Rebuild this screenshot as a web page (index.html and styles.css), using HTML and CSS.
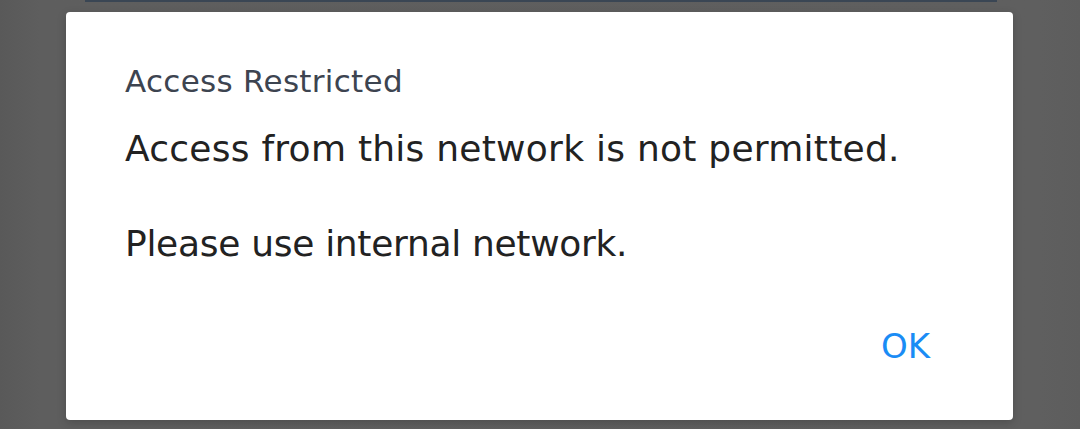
FILE: index.html
```html
<!DOCTYPE html>
<html lang="en">
<head>
<meta charset="utf-8">
<title>Access Restricted</title>
<link rel="stylesheet" href="styles.css">
</head>
<body>
<div class="backdrop">
  <div class="under-strip"></div>
  <div class="dialog" role="dialog" aria-labelledby="dlg-title">
    <h2 class="dialog-title" id="dlg-title">Access Restricted</h2>
    <p class="dialog-text first">Access from this network is not permitted.</p>
    <p class="dialog-text second">Please use internal network.</p>
    <div class="dialog-actions">
      <button class="btn-ok" type="button">OK</button>
    </div>
  </div>
</div>
</body>
</html>
```
FILE: styles.css
```css
html, body {
  margin: 0;
  padding: 0;
  width: 1080px;
  height: 429px;
  overflow: hidden;
}
body {
  background: #5c5c5c;
  font-family: "DejaVu Sans", "Noto Sans", sans-serif;
}
.backdrop {
  position: relative;
  width: 1080px;
  height: 429px;
  padding-top: 12px;
  box-sizing: border-box;
  background: linear-gradient(to right, #595959 0, #5e5e5e 40px, #5f5f5f 1040px, #5d5d5d 1080px);
}
.under-strip {
  position: absolute;
  left: 85px;
  top: 0;
  width: 912px;
  height: 2px;
  background: #3a4654;
}
.dialog {
  margin-left: 66px;
  width: 947px;
  height: 408px;
  box-sizing: border-box;
  background: #ffffff;
  border-radius: 4px;
  box-shadow: 0 3px 10px rgba(0, 0, 0, 0.18);
  padding: 51px 83px 0 59px;
  display: flex;
  flex-direction: column;
}
.dialog-title {
  margin: 0;
  font-size: 31px;
  line-height: 36px;
  font-weight: 400;
  letter-spacing: 0.3px;
  color: #3d4450;
}
.dialog-text {
  margin: 0;
  font-size: 36px;
  line-height: 44px;
  font-weight: 400;
  color: #222222;
}
.dialog-text.first {
  margin-top: 28px;
  letter-spacing: 0.25px;
}
.dialog-text.second {
  margin-top: 51px;
  letter-spacing: -0.3px;
}
.dialog-actions {
  margin-top: 58px;
  display: flex;
  justify-content: flex-end;
}
.btn-ok {
  border: 0;
  background: none;
  padding: 0;
  font-family: inherit;
  font-size: 34px;
  line-height: 44px;
  font-weight: 400;
  color: #1a8cf5;
}
```
